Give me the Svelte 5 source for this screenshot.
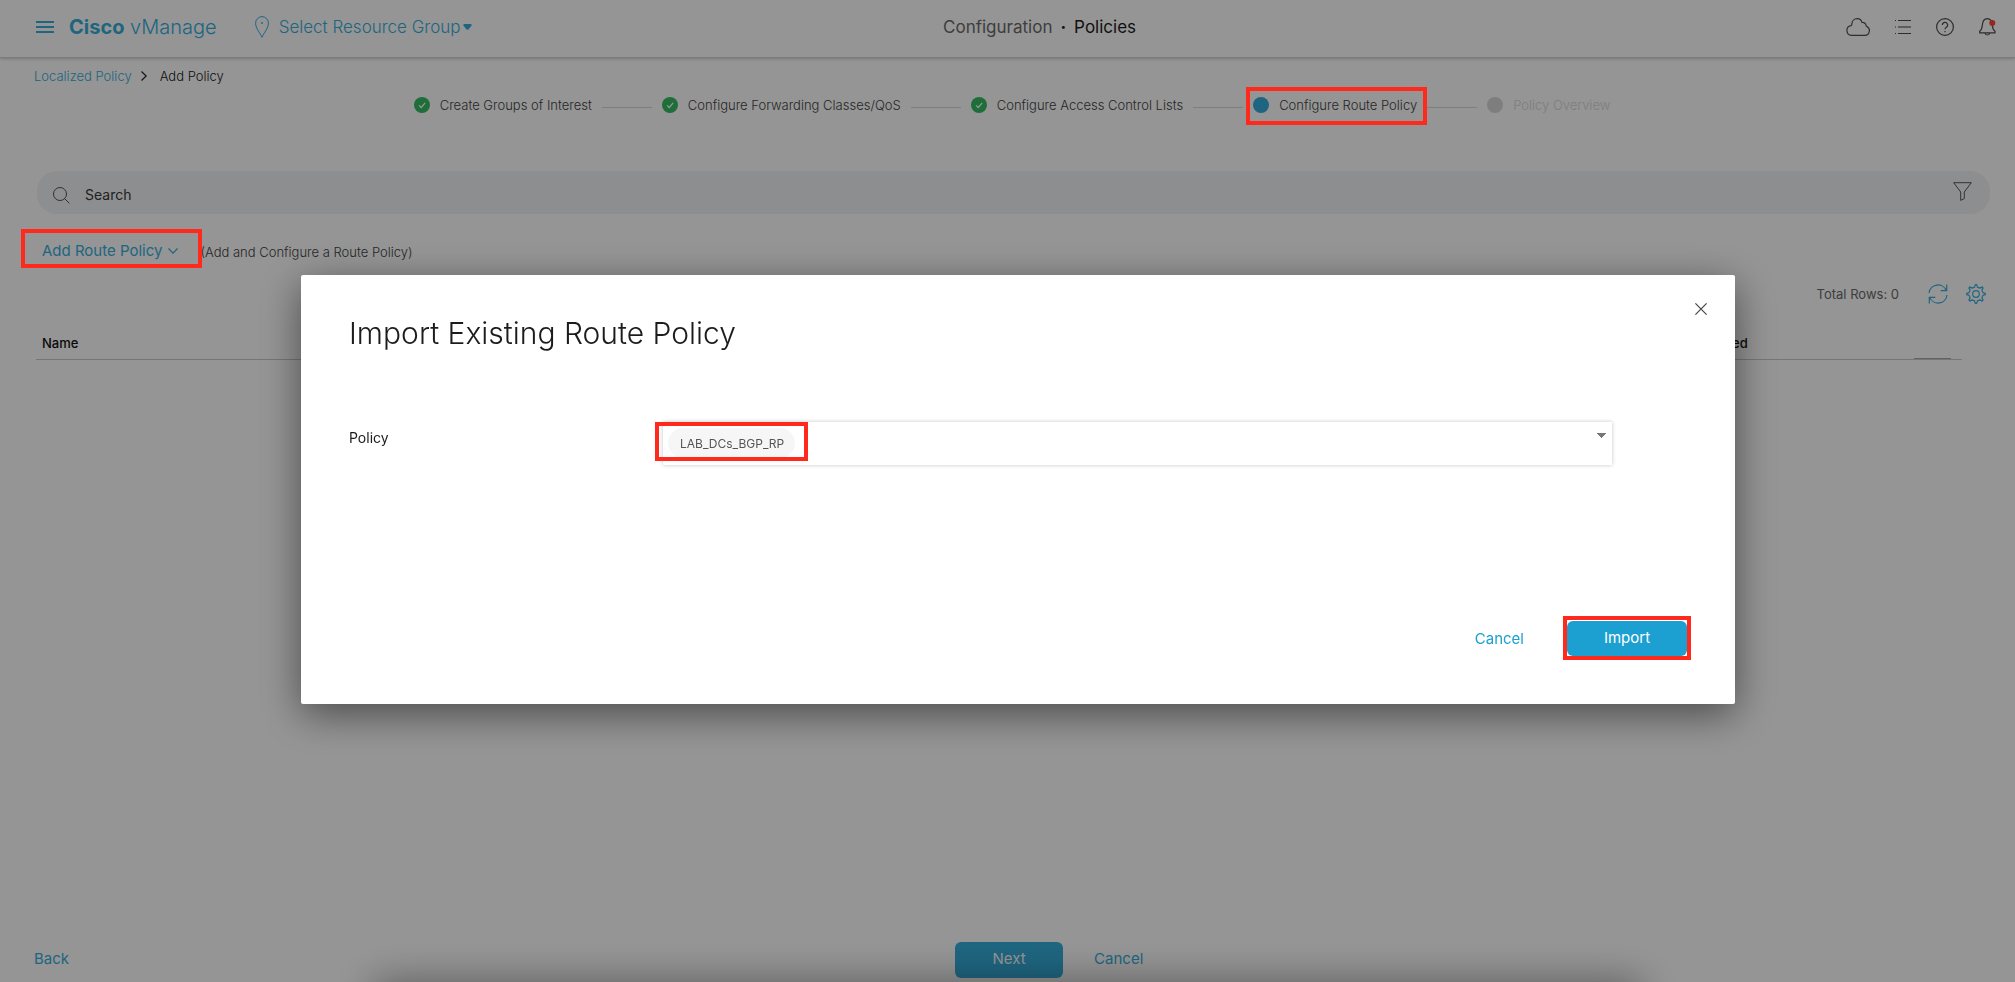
<script>
  const steps = [
    { label: 'Create Groups of Interest', state: 'done' },
    { label: 'Configure Forwarding Classes/QoS', state: 'done' },
    { label: 'Configure Access Control Lists', state: 'done' },
    { label: 'Configure Route Policy', state: 'active' },
    { label: 'Policy Overview', state: 'pending' }
  ];
  const policies = ['LAB_DCs_BGP_RP'];
  let policy = $state('LAB_DCs_BGP_RP');
</script>

<div class="page">
  <header class="topbar">
    <div class="left">
      <button class="plain" aria-label="Menu">
        <svg width="18" height="14" viewBox="0 0 18 14"><path d="M0 2h18M0 7h18M0 12h18" stroke="#35aedb" stroke-width="2" /></svg>
      </button>
      <a class="brand" href="#home"><b>Cisco</b> vManage</a>
      <button class="plain group">
        <svg width="14" height="22" viewBox="0 0 14 22" fill="none" stroke="currentColor"><path d="M7 21.3C5.200 16.800.6 12.500.6 7.200a6.400 6.600 0 0 1 12.800 0C13.400 12.500 8.800 16.800 7 21.300Z" /><circle cx="7" cy="7" r=".6" /></svg>
        <span>Select Resource Group</span>
        <svg class="caret" width="9" height="6" viewBox="0 0 9 6"><path d="M1.300 0h6.400q1.700.6.600 2.100L5.400 5.400q-.9.8-1.800 0L.7 2.100Q-.4.6 1.300 0Z" fill="currentColor" /></svg>
      </button>
    </div>
    <h1><span>Configuration</span><i>·</i>Policies</h1>
    <nav class="tools">
      <button class="plain" aria-label="Cloud">
        <svg width="24" height="18" viewBox="0 0 24 18" fill="none" stroke="currentColor" stroke-width="1.200"><path d="M5.500 17.300h13a4.700 4.700 0 0 0 1.800-9.100c-.4-2.600-2-3.900-4.300-3.800C15.200 1.900 13.500.7 11.300.7 8.300.7 6 2.900 5.900 5.700c.1.900-.2 1.500-1 1.900A4.900 4.900 0 0 0 5.500 17.300Z" /></svg>
      </button>
      <button class="plain" aria-label="Tasks">
        <svg width="16" height="16" viewBox="0 0 16 16" stroke="currentColor"><path d="M3 1.500h13M3 14.500h13M0 1.500h1M0 14.500h1" stroke-width="1.200" /><path d="M3 8h13M0 8h1" stroke-width="1.400" opacity=".7" /></svg>
      </button>
      <button class="plain" aria-label="Help">
        <svg width="18" height="18" viewBox="0 0 18 18" fill="none" stroke="currentColor" stroke-width="1.200"><circle cx="9" cy="9" r="8.400" /><path d="M6.400 7A2.600 2.600 0 1 1 10.300 9.200Q9 10 9 11.300M9 13v1.200" /></svg>
      </button>
      <button class="plain" aria-label="Notifications">
        <svg width="17" height="18" viewBox="0 0 17 18" fill="none" stroke="currentColor" stroke-width="1.200"><path d="M.7 14.800V13.200C2.500 12 3 10.500 3.300 7.500 3.600 3.600 5 .7 8.300.7s4.700 2.900 5 6.800c.3 3 .9 4.500 2.700 5.700v1.600ZM5.900 15a2.500 2.500 0 0 0 4.900 0" /><circle cx="13.300" cy="5" r="3" fill="#ff4330" stroke="none" /></svg>
      </button>
    </nav>
  </header>

  <main>
    <nav class="crumbs">
      <a href="#localized">Localized Policy</a>
      <svg width="6" height="10" viewBox="0 0 6 10" fill="none" stroke="currentColor" stroke-width="1.200"><path d="m.5.500 4.700 4.500L.5 9.500" /></svg>
      <span>Add Policy</span>
    </nav>

    <ol class="steps">
      {#each steps as step}
        <li class={step.state}>
          <svg width="16" height="16" viewBox="0 0 16 16"><circle cx="8" cy="8" r="8" fill="currentColor" />{#if step.state === 'done'}<path d="m5 8.300 2.200 2.200 4-4.600" fill="none" stroke="#fff" stroke-width="1.200" />{/if}</svg>
          <span>{step.label}</span>
        </li>
      {/each}
    </ol>

    <label class="search">
      <svg width="17" height="17" viewBox="0 0 17 17" fill="none" stroke="currentColor"><circle cx="7" cy="7" r="6.500" /><path d="m11.600 11.600 4.800 4.800" /></svg>
      <input type="search" placeholder="Search" aria-label="Search" />
      <button class="plain" aria-label="Filter">
        <svg width="19" height="19" viewBox="0 0 19 19" fill="none" stroke="currentColor"><path d="M.7.700h17.600L11.300 10v6.600L7.700 18.400V10Z" /></svg>
      </button>
    </label>

    <div class="actions">
      <button class="plain add">
        Add Route Policy
        <svg width="10" height="6" viewBox="0 0 10 6" fill="none" stroke="currentColor" stroke-width="1.200"><path d="m.5.500 4.500 4.700L9.500.5" /></svg>
      </button>
      <span>(Add and Configure a Route Policy)</span>
    </div>

    <div class="rows">
      <span>Total Rows: 0</span>
      <button class="plain" aria-label="Refresh">
        <svg width="20" height="20" viewBox="0 0 20 20" fill="none" stroke="currentColor" stroke-width="1.200"><path d="M1 9A9 9 0 0 1 18.300 6.600M18.700.6v6h-6M19 11A9 9 0 0 1 1.700 13.400M1.300 19.400v-6h6" /></svg>
      </button>
      <button class="plain" aria-label="Table settings">
        <svg width="20" height="20" viewBox="0 0 20 20" fill="none" stroke="currentColor" stroke-width="1.200" stroke-linejoin="round"><circle cx="10" cy="10" r="3.300" /><path d="M8.600 3.100 9.300.7h1.400l.7 2.400 2.500 1 2.200-1.200 1 1-1.200 2.200 1 2.500 2.400.7v1.400l-2.400.7-1 2.500 1.200 2.200-1 1-2.200-1.200-2.500 1-.7 2.400H9.300l-.7-2.400-2.500-1-2.200 1.200-1-1 1.200-2.200-1-2.500L.7 10.700V9.300l2.400-.7 1-2.500-1.200-2.200 1-1 2.200 1.200Z" /></svg>
      </button>
    </div>

    <table>
      <thead>
        <tr><th>Name</th><th class="updated">Last Updated</th><th class="menu" aria-label="Actions"></th></tr>
      </thead>
    </table>
  </main>

  <footer>
    <button class="plain back">Back</button>
    <div>
      <button class="primary">Next</button>
      <button class="plain">Cancel</button>
    </div>
  </footer>
</div>

<div class="scrim">
  <form class="dialog" role="dialog" aria-labelledby="dialog-title">
    <div class="head">
      <h2 id="dialog-title">Import Existing Route Policy</h2>
      <button type="button" class="plain close" aria-label="Close">
        <svg width="12" height="12" viewBox="0 0 12 12" stroke="currentColor" stroke-width="1.200"><path d="m.4.400 11.200 11.200M11.600.4.400 11.600" /></svg>
      </button>
    </div>
    <div class="field">
      <label for="policy">Policy</label>
      <div class="select">
        <select id="policy" bind:value={policy}>
          {#each policies as name}<option>{name}</option>{/each}
        </select>
      </div>
    </div>
    <div class="buttons">
      <button type="button" class="plain">Cancel</button>
      <span class="marked"><button type="button" class="primary">Import</button></span>
    </div>
  </form>
  <div class="dock"></div>
</div>

<style>
  :global(body) {
    background: #fff;
    font-family: Inter, "Liberation Sans", sans-serif;
    font-size: 13px;
    line-height: 16px;
  }
  .page {
    min-height: 100vh;
    display: flex;
    flex-direction: column;
    color: #6a6a6a;
  }
  svg { display: block; flex: none; }
  a { text-decoration: none; }
  button, input, select { font: inherit; }
  .plain {
    display: flex;
    align-items: center;
    border: 0;
    padding: 0;
    background: none;
    color: #1ba0d1;
    cursor: pointer;
  }
  .page .plain, .page a { color: #35aedb; }
  .primary {
    border: 0;
    border-radius: 6px;
    background: #1ba0d1;
    color: #fff;
    font-size: 15px;
    cursor: pointer;
  }

  .topbar {
    display: grid;
    grid-template-columns: 46.8% auto 1fr;
    align-items: center;
    height: 58px;
    box-sizing: border-box;
    padding-bottom: 3px;
    border-bottom: 1px solid #d4d4d4;
    box-shadow: 0 1px 3px #ccc;
  }
  .left { display: flex; align-items: center; padding-left: 36px; }
  .brand { margin-left: 15px; font-size: 20px; line-height: 24px; font-weight: 300; }
  .brand b { font-weight: 700; }
  .left .group { margin-left: 38px; font-size: 17px; line-height: 20px; font-weight: 300; }
  .group span { margin-left: 10px; }
  .group .caret { margin-left: 3px; }
  h1 { margin: 0; font-size: 17px; line-height: 20px; font-weight: 400; color: #1c1c1c; }
  h1 span { color: #6a6a6a; }
  h1 i { margin: 0 8px; font-style: normal; font-weight: 700; }
  .tools { display: flex; justify-content: flex-end; align-items: center; gap: 25px; padding-right: 19px; }
  .page .tools .plain { color: #4e4e4e; }

  main { padding: 0 25px 0 34px; }
  .crumbs { display: flex; align-items: center; gap: 13px; padding-top: 10px; color: #222; font-weight: 300; }
  .crumbs svg { margin-left: -4px; }

  .steps {
    display: flex;
    justify-content: center;
    gap: 70px;
    margin: 0;
    padding: 13px 0 0;
    list-style: none;
    font-weight: 300;
    color: #444;
  }
  li { position: relative; display: flex; align-items: center; gap: 10px; white-space: nowrap; }
  li svg { color: #35bd63; }
  .active svg { color: #35aedb; }
  .pending, .pending svg { color: #d8d8d8; }
  li:not(:last-child)::before {
    content: "";
    position: absolute;
    left: calc(100% + 10px);
    top: 10px;
    width: 50px;
    height: 1px;
    background: #d8d8d8;
  }
  .active::after, .add::after, .select::after, .marked::after {
    content: "";
    position: absolute;
    z-index: 10;
    border: 4px solid #ff2a1c;
    pointer-events: none;
  }
  .active::after { inset: -10px -10px -12px -7px; }

  .search {
    display: flex;
    align-items: center;
    height: 43px;
    margin: 58px 0 0 3px;
    padding: 0 18px 0 16px;
    border-radius: 20px;
    background: #f1f3f5;
    color: #555;
  }
  .search svg { margin-top: 6px; }
  .search input {
    flex: 1;
    margin-left: 15px;
    padding: 4px 0 0;
    border: 0;
    outline: 0;
    background: none;
    font-size: 14px;
  }
  .search input::placeholder { color: #3a3a3a; opacity: 1; }
  .page .search .plain { color: #555; }
  .search .plain svg { margin-top: -2px; }

  .actions { display: flex; align-items: center; height: 20px; margin: 27px 0 0 8px; }
  .actions .add { position: relative; gap: 6px; font-size: 15px; line-height: 20px; }
  .add::after { inset: -12px -24px -7px -21px; }
  .actions > span { margin: 2px 0 0 22px; font-weight: 300; color: #444; }

  .rows { display: flex; justify-content: flex-end; align-items: center; margin: 23px 4px 0 0; }
  .rows .plain { margin-left: 18px; }
  .rows span { margin-right: 11px; }

  table {
    width: calc(100% - 30px);
    margin: 22px 0 0 2px;
    border-collapse: collapse;
    border-bottom: 1px solid #cacaca;
    color: #111;
  }
  th { padding: 9px 0 8px 6px; text-align: left; font-weight: 500; }
  .updated { width: 94px; }
  .menu { width: 203px; background: linear-gradient(#a8a8a8, #a8a8a8) no-repeat right 11px bottom / 37px 1px; padding: 0; }

  footer {
    display: grid;
    grid-template-columns: 47.4% auto;
    align-items: center;
    margin-top: auto;
    padding: 0 0 4px;
    font-size: 15px;
  }
  footer .back { padding-left: 34px; }
  footer div { display: flex; align-items: center; gap: 31px; }
  footer .primary { width: 108px; height: 36px; padding: 0 0 2px; background: #35aedb; }
  footer .plain { padding-bottom: 2px; font-size: 15px; }

  .scrim {
    position: fixed;
    inset: 0;
    z-index: 5;
    overflow: hidden;
    padding: 275px 280px 0 301px;
    background: rgba(0, 0, 0, .416);
  }
  .dialog {
    box-sizing: border-box;
    padding: 28px 44px 48px 48px;
    border-radius: 2px;
    background: #fff;
    box-shadow: 0 10px 40px rgba(0, 0, 0, .5);
    color: #1c1c1c;
  }
  .head { display: flex; justify-content: space-between; align-items: flex-start; margin-right: -16px; }
  h2 { margin: 12px 0 0; font-size: 30px; line-height: 36px; font-weight: 300; }
  .close { color: #444; }
  .field {
    display: grid;
    grid-template-columns: 23.4% 70.7%;
    align-items: start;
    margin-top: 71px;
    font-size: 14px;
  }
  .field label { padding-top: 8px; }
  .select {
    position: relative;
    display: flex;
    align-items: center;
    height: 43px;
    box-shadow: 0 0 4px #c4c4c4;
  }
  .select::before {
    content: "";
    position: absolute;
    left: 5px;
    top: 6px;
    width: 127px;
    height: 30px;
    border-radius: 15px;
    background: #f6f6f6;
  }
  .select::after { left: -8px; top: 0; width: 145px; height: 31px; }
  select {
    position: relative;
    flex: 1;
    height: 43px;
    border: 0;
    padding: 0 17px;
    appearance: none;
    background: conic-gradient(from -45deg at 50% 100%, #777 90deg, transparent 0) no-repeat right 6px top 11px / 9px 5px;
    font-size: 12px;
    color: #555;
  }
  .buttons {
    display: flex;
    justify-content: flex-end;
    align-items: center;
    gap: 43px;
    margin-top: 156px;
    font-size: 15px;
  }
  .marked { position: relative; margin-right: 4px; }
  .marked::after { inset: -5px -4px -4px; }
  .marked .primary { display: block; width: 120px; height: 35px; padding: 0 0 2px; }
  .dock {
    position: absolute;
    left: 18.500%;
    right: 18.500%;
    top: 100%;
    height: 40px;
    box-shadow: 0 0 40px rgba(0, 0, 0, .4);
  }
</style>
